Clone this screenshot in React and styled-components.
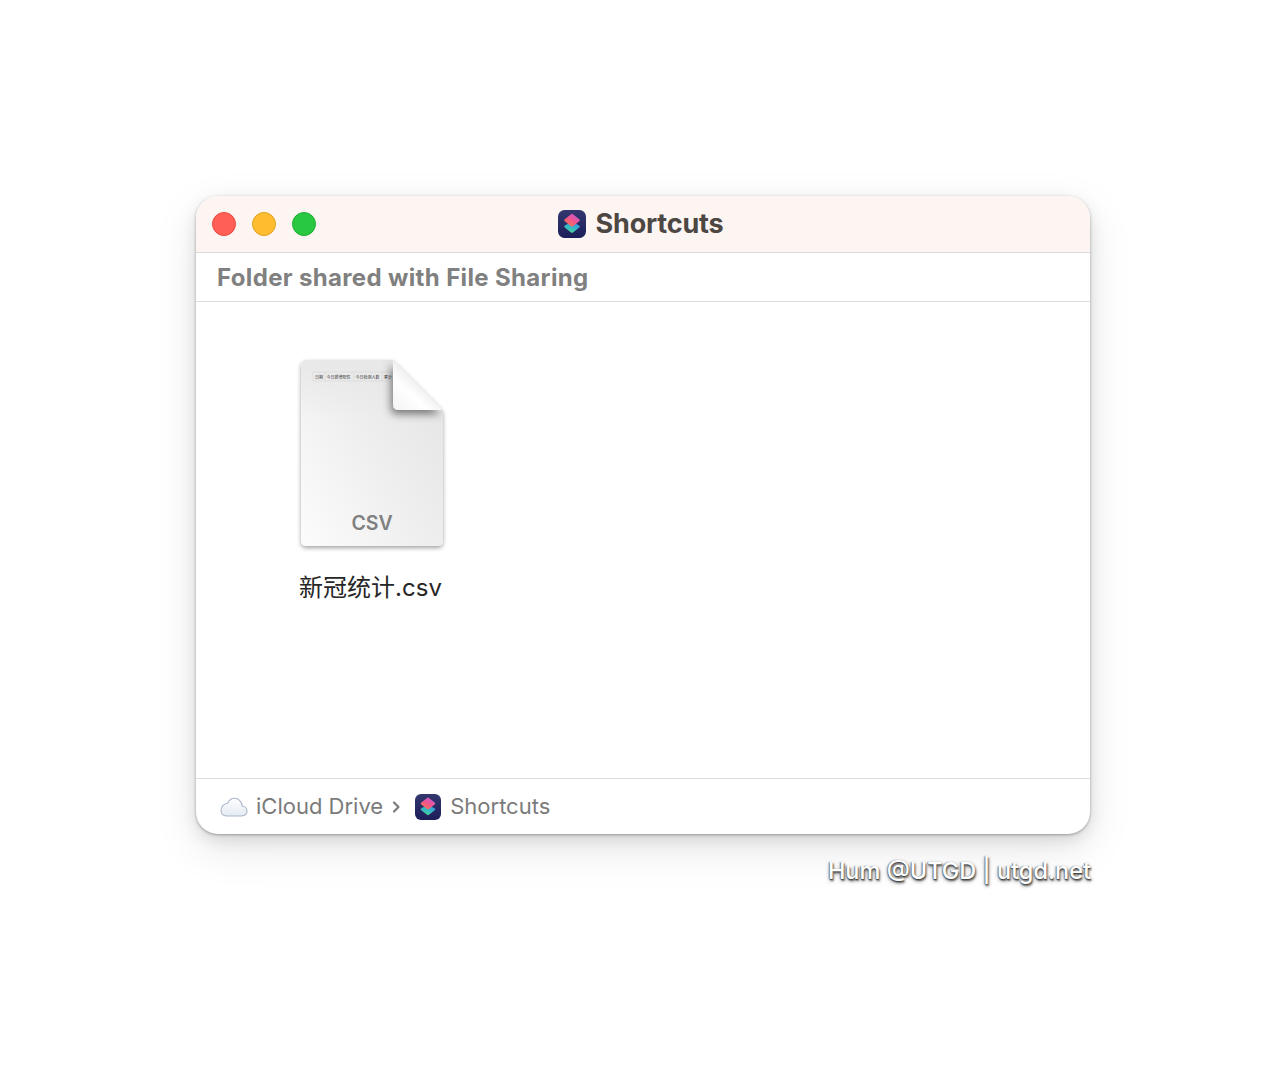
import React from 'react';
import styled, { createGlobalStyle } from 'styled-components';

const GlobalStyle = createGlobalStyle`
  html, body {
    margin: 0;
    background: #fff;
  }
  body {
    font-family: Inter, "Noto Sans CJK SC", sans-serif;
  }
`;

const Page = styled.div`
  width: 1286px;
  height: 1080px;
  padding: 196px 0 0 196px;
  box-sizing: border-box;
`;

const Window = styled.div`
  width: 894px;
  height: 638px;
  display: flex;
  flex-direction: column;
  border-radius: 22px;
  overflow: hidden;
  background: #fff;
  box-shadow: 0 1px 3px rgba(0, 0, 0, 0.32), 0 6px 16px rgba(0, 0, 0, 0.1), 0 14px 44px rgba(0, 0, 0, 0.1);
`;

const TitleBar = styled.div`
  position: relative;
  height: 56px;
  flex: none;
  display: flex;
  align-items: center;
  justify-content: center;
  gap: 10px;
  padding-right: 5px;
  background: #fdf5f2;
  border-bottom: 1px solid #dcdad9;
`;

const Lights = styled.div`
  position: absolute;
  left: 16px;
  top: 16px;
  display: flex;
  gap: 16px;
`;

const Light = styled.span`
  width: 24px;
  height: 24px;
  box-sizing: border-box;
  border-radius: 50%;
  background: ${p => p.$color};
  border: 1px solid ${p => p.$edge};
`;

const Title = styled.div`
  font-size: 27px;
  font-weight: 700;
  line-height: 30px;
  margin-bottom: 1px;
  color: #4c4743;
  letter-spacing: -0.2px;
`;

const SubHeader = styled.div`
  height: 48px;
  flex: none;
  display: flex;
  align-items: center;
  padding: 0 0 0 21px;
  font-size: 24px;
  font-weight: 700;
  color: #808080;
  letter-spacing: 0.35px;
  border-bottom: 1px solid #dedede;
`;

const Content = styled.div`
  flex: 1;
  padding: 58px 0 0 102px;
`;

const FileItem = styled.div`
  width: 146px;
  display: flex;
  flex-direction: column;
  align-items: center;
  gap: 20px;
`;

const FileIcon = styled.div`
  position: relative;
  width: 146px;
  height: 192px;
`;

const FileArt = styled.svg`
  display: block;
  overflow: visible;
`;

const FileType = styled.span`
  position: absolute;
  left: 2px;
  right: 0;
  top: 151px;
  text-align: center;
  font-size: 19.5px;
  font-weight: 600;
  line-height: 24px;
  color: #808080;
`;

const FileName = styled.div`
  margin-left: -1px;
  white-space: nowrap;
  font-size: 24px;
  line-height: 32px;
  color: #262626;
`;

const Footer = styled.div`
  height: 55px;
  flex: none;
  display: flex;
  align-items: center;
  padding-left: 24px;
  border-top: 1px solid #dedede;
  font-size: 22px;
  color: #7b7b7b;
`;

const Crumb = styled.span`
  margin-left: ${p => p.$gap}px;
  margin-bottom: 2px;
  line-height: 30px;
`;

const Chevron = styled.svg`
  margin-left: 9px;
`;

const AppBadge = styled.svg`
  display: block;
  flex: none;
  margin-left: ${p => p.$gap || 0}px;
`;

const Watermark = styled.div`
  width: 895px;
  margin-top: 22px;
  text-align: right;
  font-family: Inter, sans-serif;
  font-size: 23.5px;
  font-weight: 500;
  line-height: 30px;
  color: #fff;
  text-shadow: 0 1px 1px #444, 1px 2px 2px #666, -1px 0 1px #999, 0 2px 4px rgba(0, 0, 0, 0.4);
`;

function ShortcutsIcon({ size, gap, id }) {
  return (
    <AppBadge $gap={gap} width={size} height={size} viewBox="0 0 28 28">
      <defs>
        <linearGradient id={`${id}-bg`} x1="0" y1="0" x2="0" y2="1">
          <stop offset="0" stopColor="#34386f" />
          <stop offset="1" stopColor="#1c1e5a" />
        </linearGradient>
        <linearGradient id={`${id}-top`} x1="0.85" y1="0.1" x2="0.2" y2="0.95">
          <stop offset="0" stopColor="#c85bd0" />
          <stop offset="0.5" stopColor="#f2558c" />
          <stop offset="1" stopColor="#f7774f" />
        </linearGradient>
        <linearGradient id={`${id}-bottom`} x1="0.7" y1="0.1" x2="0.3" y2="1">
          <stop offset="0" stopColor="#3b8fe0" />
          <stop offset="0.55" stopColor="#35bcc4" />
          <stop offset="1" stopColor="#4fd889" />
        </linearGradient>
      </defs>
      <rect x="0" y="0" width="28" height="28" rx="6.5" fill={`url(#${id}-bg)`} />
      <path d="M14 11.5l7.2 3.9q1.5 1 0 2l-6.2 5q-1 .7-2 0l-6.2-5q-1.5-1 0-2z" fill={`url(#${id}-bottom)`} />
      <path d="M13 4.2q1-.7 2 0l6.2 5q1.5 1 0 2l-6.2 5q-1 .7-2 0l-6.2-5q-1.5-1 0-2z" fill={`url(#${id}-top)`} />
    </AppBadge>
  );
}

function CsvArt() {
  return (
    <FileArt width="146" height="192" viewBox="0 0 146 192">
      <defs>
        <linearGradient id="sheet" x1="0" y1="1" x2="1" y2="0.25">
          <stop offset="0" stopColor="#fcfcfc" />
          <stop offset="0.55" stopColor="#efefef" />
          <stop offset="1" stopColor="#e6e6e6" />
        </linearGradient>
        <linearGradient id="fold" x1="0" y1="1" x2="0.8" y2="0.1">
          <stop offset="0" stopColor="#f3f3f3" />
          <stop offset="0.4" stopColor="#ffffff" />
          <stop offset="1" stopColor="#d6d6d6" />
        </linearGradient>
        <linearGradient id="top-shade" x1="0" y1="0" x2="0" y2="1">
          <stop offset="0" stopColor="#e8e8e8" />
          <stop offset="1" stopColor="#e8e8e8" stopOpacity="0" />
        </linearGradient>
        <filter id="drop" x="-10%" y="-10%" width="120%" height="120%">
          <feDropShadow dx="0" dy="2" stdDeviation="2" floodColor="#000" floodOpacity="0.36" />
        </filter>
        <filter id="fold-drop" x="-50%" y="-50%" width="200%" height="200%">
          <feDropShadow dx="-2" dy="4" stdDeviation="4.5" floodColor="#000" floodOpacity="0.5" />
        </filter>
        <clipPath id="sheet-clip">
          <path d="M9 0H95L145 50V180q0 6-6 6H9q-6 0-6-6V6q0-6 6-6z" />
        </clipPath>
      </defs>
      <path d="M9 0H95L142 47q3 3 3 6V180q0 6-6 6H9q-6 0-6-6V6q0-6 6-6z" fill="url(#sheet)" filter="url(#drop)" />
      <rect x="3" y="0" width="142" height="60" fill="url(#top-shade)" clipPath="url(#sheet-clip)" />
      <path d="M15 12H95M15 21H95M15 12V21M27 12V21M56 12V21M84 12V21" fill="none" stroke="#d0d0d0" strokeWidth="0.5" />
      <g fontSize="4" fill="#333" fontFamily="'Noto Sans CJK SC', sans-serif">
        <text x="17" y="18.5">日期</text>
        <text x="28.5" y="18.5">今日新增阳性</text>
        <text x="57.5" y="18.5">今日检测人数</text>
        <text x="86" y="18.5">累计</text>
      </g>
      <g clipPath="url(#sheet-clip)">
        <path d="M95 0L143 48q1.5 2-1 2H101q-6 0-6-6z" fill="url(#fold)" filter="url(#fold-drop)" />
      </g>
    </FileArt>
  );
}

export default function App() {
  return (
    <Page>
      <GlobalStyle />
      <Window>
        <TitleBar>
          <Lights>
            <Light $color="#ff5f57" $edge="#e5493f" />
            <Light $color="#febc2e" $edge="#e0a125" />
            <Light $color="#28c840" $edge="#1fae33" />
          </Lights>
          <ShortcutsIcon size={28} id="title-app" />
          <Title>Shortcuts</Title>
        </TitleBar>
        <SubHeader>Folder shared with File Sharing</SubHeader>
        <Content>
          <FileItem>
            <FileIcon>
              <CsvArt />
              <FileType>CSV</FileType>
            </FileIcon>
            <FileName>新冠统计.csv</FileName>
          </FileItem>
        </Content>
        <Footer>
          <svg width="28" height="20" viewBox="0 0 28 20">
            <defs>
              <linearGradient id="cloud" x1="0" y1="0" x2="0" y2="1">
                <stop offset="0" stopColor="#ffffff" />
                <stop offset="1" stopColor="#e4eaf3" />
              </linearGradient>
            </defs>
            <path d="M6.5 19H21.5C25 19 27 16.8 27 14.1C27 11.3 24.9 9.4 22.4 9.3C21.5 4.6 18.3 1.2 14.6 1.2C11.2 1.2 8.9 3.3 7.7 6.2C4.1 6.3 1 9.7 1 13.3C1 16.6 3.2 19 6.5 19Z" fill="url(#cloud)" stroke="#a9b5c8" strokeWidth="1.1" />
          </svg>
          <Crumb $gap={8}>iCloud Drive</Crumb>
          <Chevron width="9" height="14" viewBox="0 0 9 14">
            <path d="M2 2.5l4.5 4.5-4.5 4.5" fill="none" stroke="#7b7b7b" strokeWidth="2.2" strokeLinecap="round" strokeLinejoin="round" />
          </Chevron>
          <ShortcutsIcon size={26} gap={14} id="footer-app" />
          <Crumb $gap={9}>Shortcuts</Crumb>
        </Footer>
      </Window>
      <Watermark>Hum @UTGD | utgd.net</Watermark>
    </Page>
  );
}
